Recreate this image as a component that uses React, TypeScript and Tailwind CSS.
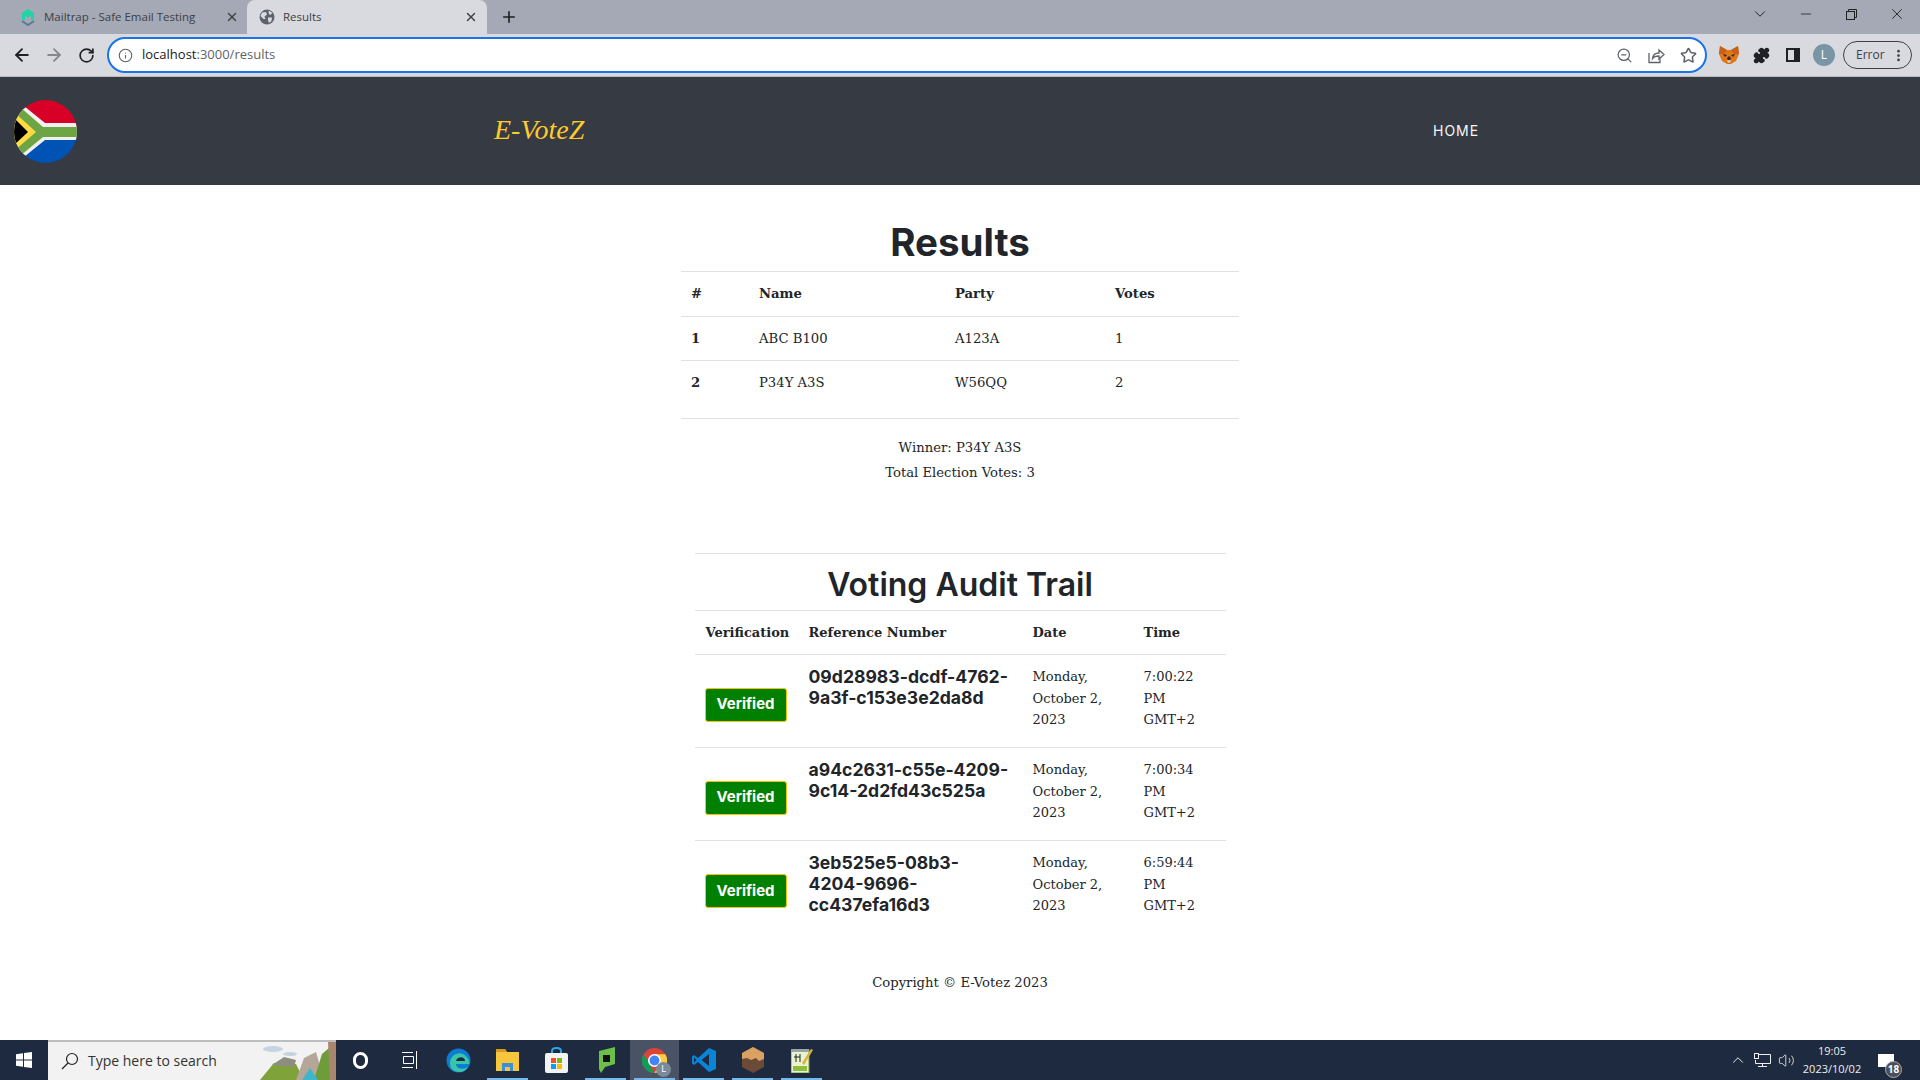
import React from 'react';
import { ArrowLeft, ArrowRight, RotateCw, Info, ZoomOut, Star, Puzzle, X, Plus, ChevronDown, ChevronUp, Minus, EllipsisVertical, Volume2 } from 'lucide-react';

const SLAB = "font-['DejaVu_Serif','Liberation_Serif',serif]";
const HEAD = "font-['Inter','Liberation_Sans',sans-serif]";

const RESULTS = [
  { id: 1, name: 'ABC B100', party: 'A123A', votes: 1 },
  { id: 2, name: 'P34Y A3S', party: 'W56QQ', votes: 2 },
];

const AUDIT = [
  { ref: ['09d28983-dcdf-4762-', '9a3f-c153e3e2da8d'], time: '7:00:22' },
  { ref: ['a94c2631-c55e-4209-', '9c14-2d2fd43c525a'], time: '7:00:34' },
  { ref: ['3eb525e5-08b3-', '4204-9696-', 'cc437efa16d3'], time: '6:59:44' },
];

const Flag = () => (
  <svg width="63" height="63" viewBox="0 0 63 63">
    <defs>
      <clipPath id="flag-clip"><circle cx="31.5" cy="31.5" r="31.5" /></clipPath>
    </defs>
    <g clipPath="url(#flag-clip)">
      <rect width="63" height="32" fill="#d80027" />
      <rect y="32" width="63" height="31" fill="#0052b4" />
      <path d="M10 6 L31 23 H63 V40 H31 L10 57 L0 63 V0 Z" fill="#f0f0f0" />
      <path d="M6 7 L29 27 H63 V37 H29 L6 56 L0 60 V3 Z" fill="#6da544" />
      <path d="M0 12 L22 32 L0 51 Z" fill="#ffda44" />
      <path d="M0 18 L14 32 L0 45 Z" fill="#000" />
    </g>
  </svg>
);

const Globe = () => (
  <svg width="16" height="16" viewBox="0 0 16 16">
    <circle cx="8" cy="8" r="7.5" fill="#5f6368" />
    <path d="M3 3.5 L7 3 L8 5.5 L5.5 7.5 L6.5 10 L4.5 10 L1.5 7 Z M10 1.5 L13.5 4 L11 6 L9.5 4 Z M9 8.5 L13 8.5 L12.5 12 L10 14 L9 11 Z" fill="#d8dae0" />
  </svg>
);

const Mailtrap = () => (
  <svg width="16" height="18" viewBox="0 0 16 18">
    <path d="M2 5 L8 1 L14 5 V12 H11 V7.5 L8 10 L5 7.5 V12 H2 Z" fill="#22d3a6" />
    <path d="M2 13 L8 17 L14 13" fill="none" stroke="#5b7a99" strokeWidth="2" />
  </svg>
);

const Fox = () => (
  <svg width="20" height="18" viewBox="0 0 20 18">
    <path d="M1 0 L8 4 H12 L19 0 L20 8 L17 15 L12 18 H8 L3 15 L0 8 Z" fill="#e2761b" />
    <path d="M1 0 L8 4 L5 8 L0 8 Z M19 0 L12 4 L15 8 L20 8 Z" fill="#c9601a" />
    <path d="M8 12 L10 18 L12 12 L10 10 Z" fill="#3d2a1c" />
    <path d="M4 8 L8 9 L6 11 Z M16 8 L12 9 L14 11 Z" fill="#2a2a2a" />
    <path d="M8 14 H12 L11 17 H9 Z" fill="#d7c1b3" />
  </svg>
);

const ShareBox = () => (
  <svg width="17" height="17" viewBox="0 0 17 17" fill="none" stroke="#5f6368" strokeWidth="1.3">
    <path d="M1 6 V15.5 H12 V12" />
    <path d="M4.5 11.5 C5 7.5 8 6 11 6 V3 L16 7.5 L11 12 V9 C8.5 9 6 9.5 4.5 11.5 Z" />
  </svg>
);

const ChromeTab = ({ active, icon, title }: { active?: boolean; icon: React.ReactNode; title: string }) => (
  <div className={`h-full flex items-center shrink-0 ${active ? 'w-[240px] bg-[#d8dae0] rounded-t-[8px] pl-[12px] pr-[9px]' : 'w-[247px] pl-[20px] pr-[8px]'}`}>
    {icon}
    <span className="ml-[8px] flex-1 text-[11.5px] text-[#3c4043] font-['Open_Sans','Liberation_Sans',sans-serif]">{title}</span>
    <X size={14} strokeWidth={2.4} className="text-[#3c4043]" />
  </div>
);

const TaskIcon = ({ children, open, active }: { children: React.ReactNode; open?: boolean; active?: boolean }) => (
  <div className={`relative w-[49px] h-full flex items-center justify-center ${active ? 'bg-[#4a5366]' : ''}`}>
    {children}
    {open && <div className="absolute bottom-0 left-[4px] right-[4px] h-[2px] bg-[#76b9ed]" />}
  </div>
);

export default function App() {
  return (
    <div className="h-screen flex flex-col overflow-hidden bg-white text-[#212529]">
      {/* browser chrome */}
      <div className="h-[34px] shrink-0 bg-[#a5a9b5] flex items-center">
        <ChromeTab icon={<Mailtrap />} title="Mailtrap - Safe Email Testing" />
        <ChromeTab active icon={<Globe />} title="Results" />
        <Plus size={18} strokeWidth={2.2} className="ml-[13px] text-[#202124]" />
        <div className="flex-1" />
        <div className="flex items-center mb-[6px]">
          <ChevronDown size={18} strokeWidth={1.3} className="text-[#202124] mr-[29px]" />
          <Minus size={16} strokeWidth={1.2} className="text-[#202124] mr-[32px]" />
          <svg width="11" height="11" viewBox="0 0 11 11" fill="none" stroke="#202124" className="mr-[31px]">
            <rect x="0.5" y="2.5" width="8" height="8" />
            <path d="M2.5 2.5 V0.5 H10.5 V8.5 H8.5" />
          </svg>
          <X size={18} strokeWidth={1.2} className="text-[#202124] mr-[14px]" />
        </div>
      </div>
      <div className="h-[43px] shrink-0 bg-[#d8dae0] border-b border-[#b9bbc1] flex items-center">
        <ArrowLeft size={20} strokeWidth={2.2} className="ml-[12px] text-[#202124]" />
        <ArrowRight size={20} strokeWidth={2.2} className="ml-[12px] text-[#85878c]" />
        <RotateCw size={17} strokeWidth={2.4} className="ml-[14px] text-[#202124]" />
        <div className="ml-[12px] w-[1600px] h-[36px] rounded-full border-[2.5px] border-[#1a73e8] bg-white flex items-center pl-[9px] pr-[8px]">
          <Info size={15} strokeWidth={1.8} className="text-[#5f6368]" />
          <span className="ml-[9px] flex-1 text-[13px] text-[#202124] font-['Open_Sans','Liberation_Sans',sans-serif]">
            localhost<span className="text-[#5f6368]">:3000/results</span>
          </span>
          <ZoomOut size={17} strokeWidth={1.7} className="text-[#5f6368]" />
          <div className="ml-[15px]"><ShareBox /></div>
          <Star size={17} strokeWidth={2.2} className="ml-[15px] text-[#5f6368]" />
        </div>
        <div className="ml-[12px]"><Fox /></div>
        <Puzzle size={17} fill="#202124" className="ml-[14px] text-[#202124]" />
        <svg width="14" height="14" viewBox="0 0 14 14" className="ml-[16px]">
          <rect width="14" height="14" fill="#202124" />
          <rect x="2" y="2" width="6" height="10" fill="#d8dae0" />
        </svg>
        <div className="ml-[13px] w-[22px] h-[22px] rounded-full bg-[#7a95a6] text-white text-[12px] flex items-center justify-center font-['Open_Sans',sans-serif]">L</div>
        <div className="ml-[8px] w-[69px] h-[28px] rounded-full border border-[#3c4043] flex items-center pl-[12px] text-[12px] text-[#3c4043] font-['Open_Sans',sans-serif]">
          Error
          <EllipsisVertical size={15} strokeWidth={2.4} className="ml-[6px] text-[#3c4043]" />
        </div>
      </div>

      {/* site navbar */}
      <header className="h-[108px] shrink-0 bg-[#353a43] flex items-center pl-[14px]">
        <Flag />
        <span className="ml-[417px] mb-[2px] w-[939px] text-[#ffca2c] text-[28px] italic font-medium font-['Liberation_Serif',serif]">E-VoteZ</span>
        <a className={`mb-[2px] text-[14px] tracking-[1px] text-[#f5f5f5] ${HEAD}`}>HOME</a>
      </header>

      <main className={`flex-1 flex flex-col items-center ${SLAB}`}>
        <h1 className={`mt-[33px] mb-[5px] text-[38.5px] leading-[48px] font-bold ${HEAD}`}>Results</h1>
        <table className="w-[558px] table-fixed border-y border-[#dee2e6] text-[13.2px]">
          <colgroup>
            <col className="w-[78px]" />
            <col className="w-[196px]" />
            <col className="w-[160px]" />
            <col />
          </colgroup>
          <thead>
            <tr className="h-[45px] font-bold text-left">
              <th className="pl-[10px]">#</th>
              <th className="pl-0">Name</th>
              <th className="pl-0">Party</th>
              <th className="pl-0">Votes</th>
            </tr>
          </thead>
          <tbody>
            {RESULTS.map((r, i) => (
              <tr key={r.id} className={`border-t border-[#dee2e6] ${i === 1 ? 'h-[58px] align-top' : 'h-[44px]'}`}>
                <td className={`pl-[10px] font-bold ${i === 1 ? 'pt-[12px]' : ''}`}>{r.id}</td>
                <td className={i === 1 ? 'pt-[12px]' : ''}>{r.name}</td>
                <td className={i === 1 ? 'pt-[12px]' : ''}>{r.party}</td>
                <td className={i === 1 ? 'pt-[12px]' : ''}>{r.votes}</td>
              </tr>
            ))}
          </tbody>
        </table>
        <p className="mt-[16px] text-[13.2px] leading-[25px]">Winner: P34Y A3S</p>
        <p className="text-[13.2px] leading-[25px]">Total Election Votes: 3</p>

        <hr className="mt-[68px] w-[531px] border-[#dee2e6]" />
        <h2 className={`mt-[12px] mb-[6px] text-[32px] leading-[38px] font-semibold ${HEAD}`}>Voting Audit Trail</h2>
        <table className="w-[531px] table-fixed border-t border-[#dee2e6] text-[13px]">
          <colgroup>
            <col className="w-[114px]" />
            <col className="w-[224px]" />
            <col className="w-[111px]" />
            <col />
          </colgroup>
          <thead>
            <tr className="h-[44px] text-left font-bold">
              <th className="pl-[11px] whitespace-nowrap">Verification</th>
              <th>Reference Number</th>
              <th>Date</th>
              <th>Time</th>
            </tr>
          </thead>
          <tbody>
            {AUDIT.map((row) => (
              <tr key={row.time} className="h-[93px] border-t border-[#dee2e6]">
                <td className="pl-[10px] pt-[7px]">
                  <span className={`inline-flex items-center justify-center w-[82px] h-[34px] rounded-[3px] border border-[#ffc107] bg-[#008000] text-white text-[15px] font-bold ${HEAD}`}>
                    Verified
                  </span>
                </td>
                <td className={`align-top pt-[11px] text-[17.6px] leading-[21px] font-bold ${HEAD}`}>
                  {row.ref.map((part) => <div key={part}>{part}</div>)}
                </td>
                <td className="align-top pt-[11px] leading-[21.6px]">Monday,<br />October 2,<br />2023</td>
                <td className="align-top pt-[11px] leading-[21.6px]">{row.time}<br />PM<br />GMT+2</td>
              </tr>
            ))}
          </tbody>
        </table>
        <p className="mt-[36px] text-[13.2px] leading-[25px]">Copyright © E-Votez 2023</p>
      </main>

      {/* windows taskbar */}
      <footer className="h-[40px] shrink-0 bg-[#1e2a40] flex items-stretch">
        <div className="w-[48px] flex items-center justify-center">
          <svg width="16" height="16" viewBox="0 0 16 16" fill="#fff">
            <path d="M0 2.3 L7 1.3 V7.5 H0 Z M8 1.1 L16 0 V7.5 H8 Z M0 8.5 H7 V14.7 L0 13.7 Z M8 8.5 H16 V16 L8 14.9 Z" />
          </svg>
        </div>
        <div className="relative w-[288px] bg-[#f2f2f2] border-t-2 border-[#bdbdbd] flex items-center pl-[12px] overflow-hidden">
          <svg width="20" height="20" viewBox="0 0 20 20" fill="none" stroke="#222" strokeWidth="1.2">
            <circle cx="12" cy="8" r="5.5" />
            <path d="M8 12 L2 18" />
          </svg>
          <span className="ml-[8px] mb-[1px] text-[14px] text-[#333] font-['Open_Sans','Liberation_Sans',sans-serif]">Type here to search</span>
          <svg width="76" height="38" viewBox="0 0 76 38" className="absolute right-0 top-0">
            <ellipse cx="13" cy="7" rx="10" ry="3" fill="#c6d3e0" />
            <ellipse cx="30" cy="12" rx="7" ry="2" fill="#c6d3e0" />
            <path d="M0 38 L14 21 L36 22 L44 38 Z" fill="#7fa33a" />
            <path d="M12 23 L24 15 L36 18 L34 25 Z" fill="#8d8d80" />
            <path d="M36 38 L44 16 L56 10 L64 38 Z" fill="#b5a69a" />
            <path d="M54 38 L62 12 L76 0 V38 Z" fill="#6f9c3a" />
            <path d="M68 0 H76 V38 H70 Z" fill="#a8876e" />
            <path d="M42 38 L50 26 L58 38 Z" fill="#3fb6c8" />
          </svg>
        </div>
        <TaskIcon>
          <div className="w-[15px] h-[17px] rounded-full border-[3px] border-white" />
        </TaskIcon>
        <TaskIcon>
          <svg width="16" height="18" viewBox="0 0 16 18" fill="none" stroke="#fff">
            <path d="M0 1.5 H11 M0 16.5 H11 M14.5 0 V18 M1.5 5.5 H11.5 V12.5 H1.5 Z" />
          </svg>
        </TaskIcon>
        <TaskIcon>
          <svg width="25" height="25" viewBox="0 0 25 25">
            <circle cx="12.5" cy="12.5" r="12" fill="#0c7cd5" />
            <path d="M5 20 C1 10 10 3 17 6 C23 9 24 15 23 16 H10 C10 21 17 22 22 19 C18 26 9 25 5 20 Z" fill="#39c6a8" />
            <path d="M10 13 C11 8 19 8 19 13 Z" fill="#1e2a40" />
          </svg>
        </TaskIcon>
        <TaskIcon open>
          <svg width="23" height="22" viewBox="0 0 23 22">
            <path d="M0 0 H9 L11 3 H23 V22 H0 Z" fill="#f8c63d" />
            <path d="M0 0 H9 L11 3 H0 Z" fill="#d99a1c" />
            <path d="M6 14 H17 V22 H14 V18 H9 V22 H6 Z" fill="#3a8fd8" />
          </svg>
        </TaskIcon>
        <TaskIcon>
          <svg width="23" height="26" viewBox="0 0 23 26">
            <path d="M7 7 V4 C7 0 16 0 16 4 V7" fill="none" stroke="#29a6e8" strokeWidth="2" />
            <rect y="6" width="23" height="20" rx="2" fill="#f3f3f3" />
            <rect x="6" y="11" width="5" height="5" fill="#f25022" />
            <rect x="12" y="11" width="5" height="5" fill="#7fba00" />
            <rect x="6" y="17" width="5" height="5" fill="#00a4ef" />
            <rect x="12" y="17" width="5" height="5" fill="#ffb900" />
          </svg>
        </TaskIcon>
        <TaskIcon open>
          <svg width="18" height="26" viewBox="0 0 18 26">
            <path d="M2 4 L18 0 V17 L8 20 L4 26 L2 22 Z" fill="#6cc04a" />
            <rect x="6" y="8" width="7" height="7" fill="#111" />
          </svg>
        </TaskIcon>
        <TaskIcon open active>
          <div className="relative">
            <svg width="25" height="25" viewBox="0 0 24 24">
              <circle cx="12" cy="12" r="12" fill="#db4437" />
              <path d="M12 24 A12 12 0 0 1 1.6 6 L7 15 Z" fill="#0f9d58" />
              <path d="M12 24 A12 12 0 0 0 22.4 6 H12 L17 15 Z" fill="#ffcd40" />
              <circle cx="12" cy="12" r="5.5" fill="#4285f4" stroke="#fff" strokeWidth="1.5" />
            </svg>
            <div className="absolute -right-[4px] -bottom-[4px] w-[15px] h-[15px] rounded-full bg-[#7a8a99] text-white text-[9px] flex items-center justify-center">L</div>
          </div>
        </TaskIcon>
        <TaskIcon open>
          <svg width="24" height="24" viewBox="0 0 24 24">
            <path d="M17 0 L24 3 V21 L17 24 L6 14 L2 17 L0 15.5 V8.5 L2 7 L6 10 Z" fill="#0a84d6" />
            <path d="M17 6 L9.5 12 L17 18 Z" fill="#1e2a40" />
            <path d="M2 9.5 L4.5 12 L2 14.5 Z" fill="#1e2a40" />
          </svg>
        </TaskIcon>
        <TaskIcon open>
          <svg width="22" height="26" viewBox="0 0 22 26">
            <path d="M11 0 L22 6 V20 L11 26 L0 20 V6 Z" fill="#6b4a38" />
            <path d="M11 0 L22 6 V12 L17 14 L14 11 L9 13 L5 11 L0 12 V6 Z" fill="#d9a262" />
          </svg>
        </TaskIcon>
        <TaskIcon open>
          <svg width="22" height="26" viewBox="0 0 22 26">
            <rect y="3" width="18" height="23" fill="#e8f3d0" stroke="#7a9c3a" />
            <rect x="0" y="2" width="18" height="3" fill="#9aa5aa" />
            <path d="M3 10 H9 M5 7 V15 M9 7 V15" stroke="#222" strokeWidth="1" />
            <rect x="2" y="19" width="14" height="5" fill="#8fbf3a" />
            <path d="M11 16 L20 2 L22 3 L13 18 Z" fill="#d9b23a" />
          </svg>
        </TaskIcon>
        <div className="flex-1" />
        <div className="flex items-center text-white">
          <ChevronUp size={18} strokeWidth={1.3} className="text-[#eee]" />
          <svg width="17" height="14" viewBox="0 0 17 14" fill="none" stroke="#eee" className="ml-[7px]">
            <path d="M4.5 1.5 H16.5 V10.5 H1.5 V7 M8.5 10.5 V13.5 M4 13.5 H13" />
            <rect x="0.5" y="0.5" width="4" height="5" fill="#1e2a40" />
          </svg>
          <Volume2 size={17} strokeWidth={1.2} className="ml-[7px] text-[#eee]" />
          <div className="ml-[5px] w-[64px] text-center text-[11px] leading-[18px] text-[#eee] font-['Open_Sans','Liberation_Sans',sans-serif]">
            19:05<br />2023/10/02
          </div>
          <div className="relative ml-[14px] mr-[26px] w-[16px] h-[13px] bg-white">
            <div className="absolute -right-[8px] -bottom-[11px] w-[17px] h-[17px] rounded-full bg-[#4a4f58] border border-[#aaa] text-white text-[10px] font-bold flex items-center justify-center">18</div>
          </div>
        </div>
      </footer>
    </div>
  );
}
